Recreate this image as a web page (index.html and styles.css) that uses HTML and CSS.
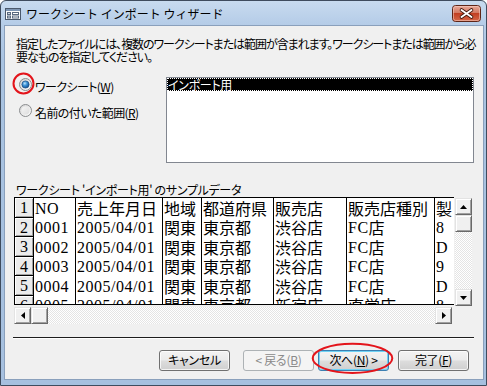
FILE: index.html
```html
<!DOCTYPE html>
<html lang="ja">
<head>
<meta charset="utf-8">
<title>ワークシート インポート ウィザード</title>
<link rel="stylesheet" href="styles.css">
</head>
<body>
<div class="window">
  <div class="titlebar">
    <svg class="ticon" width="16" height="12" viewBox="0 0 16 12">
      <rect x="0.5" y="0.5" width="15" height="11" fill="#fdfdfd" stroke="#4b596c"/>
      <rect x="1" y="1" width="14" height="2" fill="#7d95b3"/>
      <rect x="2.5" y="4.5" width="3" height="2" fill="#cfd8e4" stroke="#5a6a80"/>
      <rect x="2.5" y="8" width="3" height="2" fill="#cfd8e4" stroke="#5a6a80"/>
      <rect x="7.5" y="4.5" width="6" height="2" fill="#fff" stroke="#5a6a80"/>
      <rect x="7.5" y="8" width="6" height="2" fill="#fff" stroke="#5a6a80"/>
    </svg>
    <span class="ttext">ワークシート インポート ウィザード</span>
    <svg class="close" width="29" height="17" viewBox="0 0 29 17">
      <defs>
        <linearGradient id="cg" x1="0" y1="0" x2="0" y2="1">
          <stop offset="0" stop-color="#e9aa9a"/>
          <stop offset="0.45" stop-color="#d37a63"/>
          <stop offset="0.5" stop-color="#c23f22"/>
          <stop offset="1" stop-color="#d66a4b"/>
        </linearGradient>
      </defs>
      <rect x="0.5" y="0.5" width="28" height="16" rx="3" fill="url(#cg)" stroke="#5e2517"/>
      <rect x="1.5" y="1.5" width="26" height="14" rx="2" fill="none" stroke="#f6d2c7" stroke-opacity="0.55"/>
      <path d="M9.5 5 L19.5 12 M19.5 5 L9.5 12" stroke="#41180e" stroke-width="3.6" stroke-linecap="round"/>
      <path d="M9.5 5 L19.5 12 M19.5 5 L9.5 12" stroke="#ffffff" stroke-width="1.9" stroke-linecap="round"/>
    </svg>
  </div>
  <div class="client">
    <p class="intro">指定したファイルには、複数のワークシートまたは範囲が含まれます。ワークシートまたは範囲から必<br>要なものを指定してください。</p>
    <div class="options">
      <div class="radios">
        <div class="radio first">
          <svg width="13" height="13" viewBox="0 0 13 13">
            <defs>
              <linearGradient id="rg1" x1="0" y1="0" x2="1" y2="1">
                <stop offset="0" stop-color="#cfcfcf"/>
                <stop offset="1" stop-color="#ffffff"/>
              </linearGradient>
              <radialGradient id="dot" cx="0.4" cy="0.35" r="0.65">
                <stop offset="0" stop-color="#bfe4fb"/>
                <stop offset="0.45" stop-color="#3f95d8"/>
                <stop offset="1" stop-color="#0e4f93"/>
              </radialGradient>
            </defs>
            <circle cx="6.5" cy="6.5" r="6" fill="url(#rg1)" stroke="#8b8d8f"/>
            <circle cx="6.5" cy="6.5" r="3.6" fill="url(#dot)" stroke="#1b4c80" stroke-width="0.7"/>
          </svg>
          <span class="rlabel">ワークシート(<u>W</u>)</span>
        </div>
        <div class="radio second">
          <svg width="13" height="13" viewBox="0 0 13 13">
            <defs>
              <linearGradient id="rg2" x1="0" y1="0" x2="1" y2="1">
                <stop offset="0" stop-color="#d2d2d2"/>
                <stop offset="1" stop-color="#ffffff"/>
              </linearGradient>
              <linearGradient id="rg3" x1="0" y1="0" x2="1" y2="1">
                <stop offset="0" stop-color="#f6f6f6"/>
                <stop offset="1" stop-color="#dcdcdc"/>
              </linearGradient>
            </defs>
            <circle cx="6.5" cy="6.5" r="6" fill="url(#rg2)" stroke="#8b8d8f"/>
            <circle cx="6.5" cy="6.5" r="4" fill="url(#rg3)"/>
          </svg>
          <span class="rlabel">名前の付いた範囲(<u>R</u>)</span>
        </div>
      </div>
      <div class="list">
        <div class="item">インポート用</div>
      </div>
    </div>
    <p class="caption">ワークシート 'インポート用' のサンプルデータ</p>
    <div class="gridrow">
      <div class="grid">
        <div class="r">
          <div class="c h">1</div><div class="c w1"><span class="a">NO</span></div><div class="c w2">売上年月日</div><div class="c w3">地域</div><div class="c w4">都道府県</div><div class="c w5">販売店</div><div class="c w6">販売店種別</div><div class="c w7">製</div>
        </div>
        <div class="r">
          <div class="c h">2</div><div class="c w1"><span class="a">0001</span></div><div class="c w2"><span class="a">2005/04/01</span></div><div class="c w3">関東</div><div class="c w4">東京都</div><div class="c w5">渋谷店</div><div class="c w6"><span class="a">FC</span>店</div><div class="c w7"><span class="a">8</span></div>
        </div>
        <div class="r">
          <div class="c h">3</div><div class="c w1"><span class="a">0002</span></div><div class="c w2"><span class="a">2005/04/01</span></div><div class="c w3">関東</div><div class="c w4">東京都</div><div class="c w5">渋谷店</div><div class="c w6"><span class="a">FC</span>店</div><div class="c w7"><span class="a">D</span></div>
        </div>
        <div class="r">
          <div class="c h">4</div><div class="c w1"><span class="a">0003</span></div><div class="c w2"><span class="a">2005/04/01</span></div><div class="c w3">関東</div><div class="c w4">東京都</div><div class="c w5">渋谷店</div><div class="c w6"><span class="a">FC</span>店</div><div class="c w7"><span class="a">9</span></div>
        </div>
        <div class="r">
          <div class="c h">5</div><div class="c w1"><span class="a">0004</span></div><div class="c w2"><span class="a">2005/04/01</span></div><div class="c w3">関東</div><div class="c w4">東京都</div><div class="c w5">渋谷店</div><div class="c w6"><span class="a">FC</span>店</div><div class="c w7"><span class="a">D</span></div>
        </div>
        <div class="r">
          <div class="c h">6</div><div class="c w1"><span class="a">0005</span></div><div class="c w2"><span class="a">2005/04/01</span></div><div class="c w3">関東</div><div class="c w4">東京都</div><div class="c w5">新宿店</div><div class="c w6">直営店</div><div class="c w7"><span class="a">8</span></div>
        </div>
      </div>
      <div class="vs">
        <div class="sb"><svg width="7" height="4" viewBox="0 0 7 4"><path d="M3.5 0 L7 4 L0 4 Z" fill="#000"/></svg></div>
        <div class="sb"></div>
        <div class="track"></div>
        <div class="sb"><svg width="7" height="4" viewBox="0 0 7 4"><path d="M0 0 L7 0 L3.5 4 Z" fill="#000"/></svg></div>
      </div>
    </div>
    <div class="hs">
      <div class="sb"><svg width="4" height="7" viewBox="0 0 4 7"><path d="M0 3.5 L4 0 L4 7 Z" fill="#000"/></svg></div>
      <div class="sb"></div>
      <div class="track"></div>
      <div class="sb"><svg width="4" height="7" viewBox="0 0 4 7"><path d="M0 0 L4 3.5 L0 7 Z" fill="#000"/></svg></div>
    </div>
    <div class="sep"></div>
    <div class="btns">
      <div class="btn cancel">キャンセル</div>
      <div class="btn back disabled">&lt; 戻る(<u>B</u>)</div>
      <div class="btn next default">次へ(<u>N</u>) &gt;</div>
      <div class="btn finish">完了(<u>F</u>)</div>
    </div>
  </div>
  <svg class="marks" width="487" height="386" viewBox="0 0 487 386">
    <circle cx="23.5" cy="83.5" r="10" fill="none" stroke="#e3141b" stroke-width="2"/>
    <ellipse cx="352.5" cy="358.3" rx="39.8" ry="14.6" fill="none" stroke="#e3141b" stroke-width="2"/>
  </svg>
</div>
</body>
</html>
```

FILE: styles.css
```css
* { box-sizing: border-box; }
html, body { margin: 0; padding: 0; }
body {
  width: 487px;
  height: 386px;
  overflow: hidden;
  background: #ffffff;
  font-family: "Noto Sans CJK JP", sans-serif;
  font-size: 12px;
  color: #000;
}
p { margin: 0; }

.window {
  position: relative;
  width: 487px;
  height: 386px;
  border: 1px solid #3f4c5e;
  border-radius: 6px 6px 0 0;
  background: linear-gradient(to bottom, #c8dbef 0px, #b6cde8 22px, #a9c3e1 60px, #a6c0df 100%);
  padding: 0 2px 5px 3px;
  display: flex;
  flex-direction: column;
}

.titlebar {
  height: 24px;
  flex: none;
  display: flex;
  align-items: center;
}
.ticon { margin-left: 1px; margin-top: 1px; flex: none; }
.ttext {
  margin-left: 5px;
  font-size: 12px;
  line-height: 14px;
  white-space: nowrap;
  margin-top: 1px;
}
.close {
  flex: none;
  margin-left: auto;
  margin-right: 3px;
  align-self: flex-start;
  margin-top: 4px;
}

.client {
  flex: 1;
  background: #f0f0f0;
  border: 1px solid #8aa0bc;
  padding: 0 9px;
  display: flex;
  flex-direction: column;
  font-feature-settings: "palt";
  letter-spacing: -0.3px;
}

.intro {
  margin-top: 11px;
  padding-left: 2px;
  line-height: 13px;
  white-space: nowrap;
  letter-spacing: -1.05px;
}

.options {
  margin-top: 14px;
  display: flex;
}
.radios { width: 152px; flex: none; }
.radio {
  display: flex;
  align-items: center;
  margin-left: 5px;
  height: 13px;
}
.radio svg { flex: none; }
.radio.first { margin-top: 1px; }
.radio.second { margin-top: 13px; }
.rlabel {
  margin-left: 3px;
  line-height: 13px;
  margin-top: 3px;
  white-space: nowrap;
  letter-spacing: -0.6px;
}

.list {
  width: 308px;
  height: 86px;
  border: 1px solid #828790;
  background: #fff;
}
.item {
  height: 13px;
  background: #000;
  color: #fff;
  line-height: 13px;
  padding-left: 1px;
  outline: 1px dotted #ffffff;
  outline-offset: -1px;
  white-space: nowrap;
}

.caption {
  margin-top: 20px;
  padding-left: 2px;
  line-height: 13px;
  white-space: nowrap;
}

.gridrow {
  margin-top: 1px;
  height: 109px;
  display: flex;
  align-items: flex-start;
}
.grid {
  width: 440px;
  height: 108px;
  border: 1px solid #000;
  border-right: none;
  background: #fff;
  overflow: hidden;
  flex: none;
  font-feature-settings: normal;
  letter-spacing: 0;
}
.r { display: flex; height: 20px; }
.r:nth-child(even) { height: 19px; }
.c {
  flex: none;
  height: 100%;
  border-right: 1px solid #000;
  padding-left: 1px;
  font-size: 16px;
  line-height: 19px;
  white-space: nowrap;
  overflow: hidden;
  display: flex;
  align-items: center;
}
.a {
  font-family: "Liberation Serif", serif;
  letter-spacing: 0.5px;
}
.h {
  width: 19px;
  background: #ebebeb;
  border-bottom: 1px solid #000;
  box-shadow: inset 1px 1px #ffffff, inset -1px -1px #a0a0a0;
  justify-content: center;
  padding-left: 0;
  font-family: "Liberation Serif", serif;
}
.w1 { width: 42px; }
.w2 { width: 87px; }
.w3 { width: 39px; }
.w4 { width: 72px; }
.w5 { width: 73px; }
.w6 { width: 88px; }
.w7 { width: 40px; border-right: none; }

.vs {
  width: 17px;
  height: 108px;
  margin-top: 1px;
  margin-left: 1px;
  display: flex;
  flex-direction: column;
  flex: none;
}
.hs {
  width: 438px;
  height: 17px;
  margin-top: 1px;
  display: flex;
  flex: none;
}
.sb {
  width: 17px;
  height: 17px;
  flex: none;
  background: #f0f0f0;
  border: 1px solid;
  border-color: #e3e3e3 #696969 #696969 #e3e3e3;
  box-shadow: inset 1px 1px #ffffff, inset -1px -1px #a0a0a0;
  display: flex;
  align-items: center;
  justify-content: center;
}
.sb svg { display: block; }
.track {
  flex: 1;
  background: repeating-conic-gradient(#e4e4e4 0 25%, #ffffff 0 50%) 0 0 / 2px 2px;
}

.sep {
  margin-top: 13px;
  margin-left: -1px;
  height: 2px;
  border-top: 1px solid #1e1e1e;
  border-bottom: 1px solid #ffffff;
}

.btns {
  margin-top: 11px;
  display: flex;
}
.btn {
  width: 71px;
  height: 21px;
  flex: none;
  border: 1px solid #707070;
  border-radius: 3px;
  background: linear-gradient(to bottom, #f3f3f3 0%, #ebebeb 48%, #dddddd 52%, #cfcfcf 100%);
  box-shadow: inset 0 0 0 1px rgba(255,255,255,0.75);
  text-align: center;
  line-height: 18px;
  white-space: nowrap;
}
.cancel { margin-left: 145px; }
.back { margin-left: 13px; }
.next { margin-left: 4px; }
.finish { margin-left: 9px; }
.disabled {
  border-color: #adb2b5;
  background: #f4f4f4;
  box-shadow: none;
  color: #8a8a8a;
}
.default {
  border-color: #3c7fb1;
  box-shadow: inset 0 0 0 1px #6fd2f5;
}

.marks {
  position: absolute;
  left: -1px;
  top: -1px;
  pointer-events: none;
}
```
